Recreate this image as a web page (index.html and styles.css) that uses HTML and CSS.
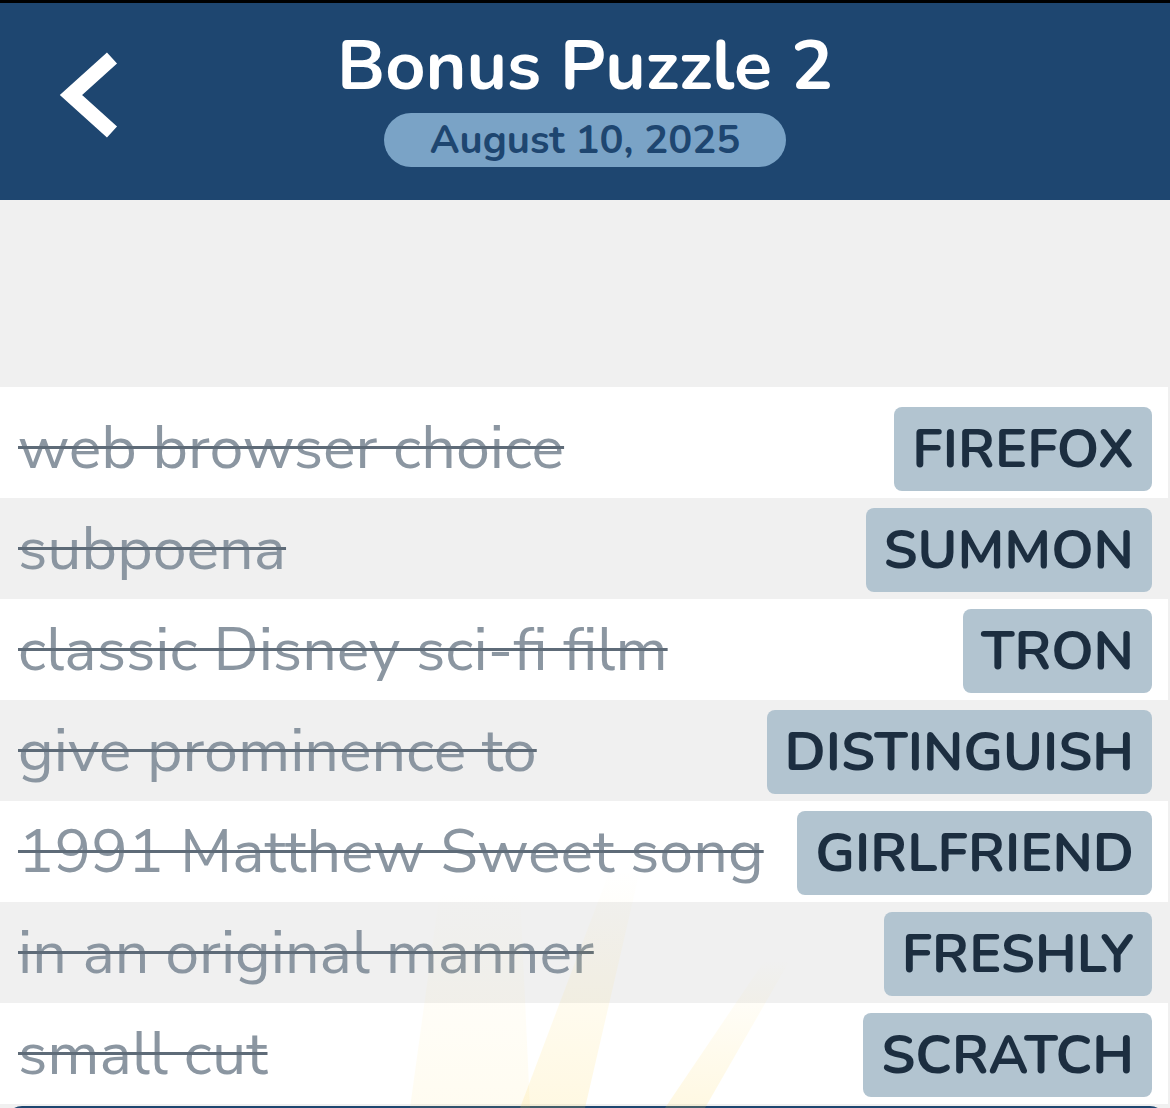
FILE: index.html
```html
<!DOCTYPE html>
<html lang="en">
<head>
  <meta charset="UTF-8">
  <title>Bonus Puzzle 2</title>
  <link rel="stylesheet" href="styles.css">
</head>
<body>
  <div class="status"></div>
  <header class="header">
    <button class="back" aria-label="Back">
      <svg width="70" height="100" viewBox="0 0 70 100">
        <path d="M60 13 L19 50 L60 87" fill="none" stroke="#fff" stroke-width="15" stroke-linejoin="miter"/>
      </svg>
    </button>
    <div class="heading">
      <h1>Bonus Puzzle 2</h1>
      <div class="date">August 10, 2025</div>
    </div>
  </header>

  <div class="board"></div>

  <ul class="clues" id="clues">
    <li class="clue"><span class="hint">web browser choice</span><span class="answer">FIREFOX</span></li>
    <li class="clue"><span class="hint">subpoena</span><span class="answer">SUMMON</span></li>
    <li class="clue"><span class="hint">classic Disney sci-fi film</span><span class="answer">TRON</span></li>
    <li class="clue"><span class="hint">give prominence to</span><span class="answer">DISTINGUISH</span></li>
    <li class="clue"><span class="hint">1991 Matthew Sweet song</span><span class="answer">GIRLFRIEND</span></li>
    <li class="clue"><span class="hint">in an original manner</span><span class="answer">FRESHLY</span></li>
    <li class="clue"><span class="hint">small cut</span><span class="answer">SCRATCH</span></li>
  </ul>

  <div class="tray"></div>

  <!-- faint glow behind the list -->
  <svg class="rays" width="1170" height="1108" viewBox="0 0 1170 1108">
    <defs>
      <linearGradient id="ray" x1="0" y1="1" x2="0" y2="0">
        <stop offset="0" stop-color="#ffd54a" stop-opacity="0.16"/>
        <stop offset="1" stop-color="#ffd54a" stop-opacity="0"/>
      </linearGradient>
    </defs>
    <polygon points="520,1108 585,1108 640,870 610,870" fill="url(#ray)"/>
    <polygon points="665,1108 705,1108 790,960 765,960" fill="url(#ray)"/>
    <polygon points="410,1108 530,1108 520,890 440,890" fill="url(#ray)" opacity="0.5"/>
  </svg>
</body>
</html>
```

FILE: styles.css
```css
body {
  margin: 0;
  background: #f0f0f0;
  font-family: "Nunito", Lato, "Noto Sans", sans-serif;
  overflow: hidden;
  height: 1108px;
  position: relative;
}
.status {
  height: 3px;
  background: #000;
}
.header {
  height: 197px;
  background: #1e4670;
  position: relative;
  display: flex;
  justify-content: center;
}
.back {
  position: absolute;
  left: 52px;
  top: 42px;
  background: none;
  border: none;
  padding: 0;
  cursor: pointer;
}
.heading {
  display: flex;
  flex-direction: column;
  align-items: center;
  padding-top: 21px;
}
.heading h1 {
  margin: 0;
  color: #fff;
  font-size: 70px;
  font-weight: bold;
  line-height: 84px;
}
.date {
  margin-top: 5px;
  background: #7aa3c6;
  color: #1e4670;
  font-size: 40px;
  font-weight: bold;
  width: 402px;
  height: 54px;
  line-height: 54px;
  text-align: center;
  border-radius: 27px;
}
.board {
  height: 187px;
}
.clues {
  list-style: none;
  margin: 0;
  padding: 0;
  background: #fff;
  width: 1168px;
}
.clue {
  display: flex;
  align-items: center;
  justify-content: space-between;
  height: 101px;
  padding: 0 16px 0 18px;
}
.clue:nth-child(even) {
  background: #f0f0f0;
}
.clue:first-child {
  padding-top: 10px;
}
.hint {
  font-family: "Nunito Sans", "Nunito", sans-serif;
  color: #8b96a1;
  font-size: 61px;
  line-height: 70px;
  text-decoration: line-through;
  text-decoration-color: #5e6b78;
  text-decoration-thickness: 3px;
}
.answer {
  background: #b2c4d0;
  color: #1c2e40;
  font-size: 54px;
  font-weight: bold;
  height: 84px;
  line-height: 84px;
  padding: 0 18px;
  border-radius: 8px;
  margin-top: 2px;
}
.tray {
  height: 40px;
  width: 1160px;
  margin-left: 6px;
  background: #1e4670;
  border-radius: 16px 16px 0 0;
  margin-top: 2px;
}
.rays {
  position: absolute;
  left: 0;
  top: 0;
  pointer-events: none;
}
```
